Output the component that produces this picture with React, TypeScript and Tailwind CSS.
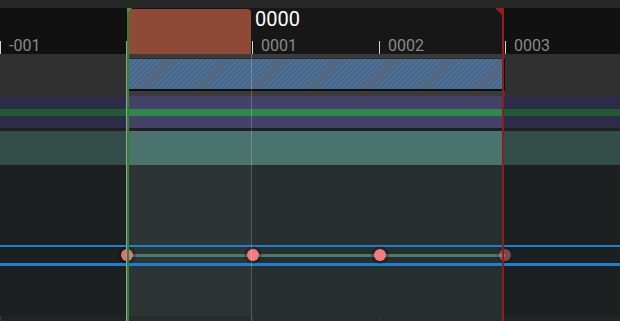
import React from 'react';

// ruler ticks (x in px) and their frame labels
const TICKS = [
  { x: 0, label: '-001' },
  { x: 126, label: '' },
  { x: 252, label: '0001' },
  { x: 379, label: '0002' },
  { x: 505, label: '0003' },
];

const KEYS = [
  { x: 127, dim: 'opacity-90' },
  { x: 253, dim: 'opacity-100' },
  { x: 380, dim: 'opacity-100' },
  { x: 505, dim: 'opacity-45' },
];

const App: React.FC = () => {
  return (
    <div className="relative w-[620px] h-[321px] overflow-hidden bg-[#1c2020] font-['Roboto',sans-serif] select-none">
      {/* top bar */}
      <div className="h-[8px] bg-[#272727]" />

      {/* time ruler */}
      <div className="relative flex h-[46px]">
        <div className="w-[127px] bg-[#111111]" />
        <div className="w-[376px] bg-[#171717] pt-[1px] pl-[1px]">
          <div className="w-[123px] h-[45px] bg-[#8f4a37] rounded-tr-[4px]" />
        </div>
        <div className="flex-1 bg-[#111111]" />

        {TICKS.map((t) => (
          <React.Fragment key={t.x}>
            <div
              className="absolute top-[33px] h-[13px] w-[1px] bg-[#d4d4d4]"
              style={{ left: t.x }}
            />
            {t.label && (
              <span
                className="absolute top-[30px] text-[16px] leading-none text-[#8a8a8a]"
                style={{ left: t.x + 9 }}
              >
                {t.label}
              </span>
            )}
          </React.Fragment>
        ))}
        <span className="absolute left-[255px] top-[1px] text-[20px] leading-none text-white">0000</span>
      </div>

      {/* section track */}
      <div className="flex h-[42px]">
        <div className="w-[127px] bg-[#303030]" />
        <div className="w-[378px] bg-[#3b3b3b] pt-[4px]">
          <div className="h-[33px] border-t border-[#2b2b2b] border-b-2 border-b-[#0e0e0e] border-r border-r-[#0e0e0e] bg-[repeating-linear-gradient(135deg,#566479_0px,#566479_2.4px,#3c79b4_2.4px,#3c79b4_3.6px)]" />
        </div>
        <div className="flex-1 bg-[#303030]" />
      </div>

      {/* purple track with green band */}
      <div className="flex h-[32px]">
        <div className="w-[127px] flex flex-col">
          <div className="h-[13px] bg-[#2c2b48]" />
          <div className="h-[7px] bg-[#225a34]" />
          <div className="flex-1 bg-[#2c2b48]" />
        </div>
        <div className="w-[376px] flex flex-col">
          <div className="h-[13px] bg-[#45426a]" />
          <div className="h-[7px] bg-[#2f8a4a]" />
          <div className="flex-1 bg-[#45426a]" />
        </div>
        <div className="flex-1 flex flex-col">
          <div className="h-[13px] bg-[#2c2b48]" />
          <div className="h-[7px] bg-[#225a34]" />
          <div className="flex-1 bg-[#2c2b48]" />
        </div>
      </div>
      <div className="h-[3px] bg-[#1f1f24]" />

      {/* teal track */}
      <div className="flex h-[34px]">
        <div className="w-[127px] bg-[#334d48]" />
        <div className="w-[376px] bg-[#4a736d]" />
        <div className="flex-1 bg-[#334d48]" />
      </div>

      {/* curve area */}
      <div className="relative flex h-[151px]">
        <div className="w-[127px] bg-[#1c2020]" />
        <div className="w-[124px] bg-[#2c3534]" />
        <div className="w-[252px] bg-[#272f2e]" />
        <div className="flex-1 bg-[#1c2020]" />

        <div className="absolute left-0 right-0 top-[80px] h-[2px] bg-[#1e80d2]" />
        <div className="absolute left-0 right-0 top-[98px] h-[3px] bg-[#1e80d2]" />
        <div className="absolute left-[127px] w-[378px] top-[89px] h-[3px] bg-[#4e7870]" />
        {KEYS.map((k) => (
          <div
            key={k.x}
            className={`absolute top-[84px] w-[12px] h-[12px] -ml-[6px] rounded-full bg-[#f67a7a] ring-[3px] ring-black/20 ${k.dim}`}
            style={{ left: k.x }}
          />
        ))}
      </div>

      {/* bottom strip */}
      <div className="relative flex h-[5px]">
        <div className="w-[127px] bg-[#212424]" />
        <div className="w-[376px] bg-[#2a2c2c]" />
        <div className="flex-1 bg-[#212424]" />
        {[0, 252, 379].map((x) => (
          <div key={x} className="absolute top-0 h-[5px] w-[1px] bg-[#3a3a3a]" style={{ left: x }} />
        ))}
      </div>

      {/* playback range markers */}
      <div className="absolute left-[251px] top-[54px] bottom-0 w-[1px] bg-white/20" />
      <div className="absolute left-[126px] top-[41px] bottom-0 w-[1px] bg-[#9c9c9c]" />
      <div className="absolute left-[127px] top-[8px] bottom-0 w-[2px] bg-[#2c842c]" />
      <div className="absolute left-[127px] top-[8px] w-0 h-0 border-t-[5px] border-t-[#3f9a2f] border-r-[5px] border-r-transparent" />
      <div className="absolute left-[502px] top-[8px] bottom-0 w-[2px] bg-[#8e1e1e]" />
      <div className="absolute left-[495px] top-[8px] w-0 h-0 border-t-[8px] border-t-[#921f1f] border-l-[8px] border-l-transparent" />
    </div>
  );
};

export default App;
